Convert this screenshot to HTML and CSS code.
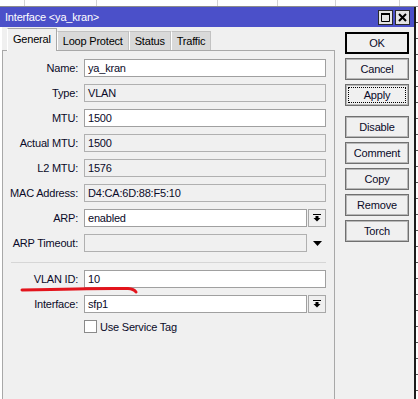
FILE: index.html
```html
<!DOCTYPE html>
<html lang="en">
<head>
  <meta charset="UTF-8" />
  <title>Interface &lt;ya_kran&gt;</title>
  <link rel="stylesheet" href="styles.css">
</head>
<body>

  <div class="desktop">
    <div class="strip-top">
      <span class="cell w25"></span>
      <span class="cell w72"></span>
      <span class="cell w121"></span>
      <span class="cell w60"></span>
      <span class="cell w58"></span>
      <span class="cell w64"></span>
    </div>

    <div class="desk-row">
      <div class="window">
        <div class="titlebar">
          <span class="title">Interface &lt;ya_kran&gt;</span>
          <div class="title-btns">
            <span class="tbtn">
              <svg width="9" height="9" viewBox="0 0 9 9"><path d="M0.5 0.5h8v8h-8z" fill="none" stroke="#000"/><rect x="0" y="0" width="9" height="2" fill="#000"/></svg>
            </span>
            <span class="tbtn">
              <svg width="9" height="9" viewBox="0 0 9 9"><path d="M1 1L8 8M8 1L1 8" stroke="#000" stroke-width="2"/></svg>
            </span>
          </div>
        </div>

        <div class="window-body">
          <div class="left">
            <div class="tabs">
              <span class="tab active">General</span>
              <span class="tab">Loop Protect</span>
              <span class="tab">Status</span>
              <span class="tab">Traffic</span>
            </div>

            <div class="panel">
              <div class="form">
                <span class="label">Name:</span>
                <div class="field">ya_kran</div>

                <span class="label">Type:</span>
                <div class="field ro">VLAN</div>

                <span class="label">MTU:</span>
                <div class="field">1500</div>

                <span class="label">Actual MTU:</span>
                <div class="field ro">1500</div>

                <span class="label">L2 MTU:</span>
                <div class="field ro">1576</div>

                <span class="label">MAC Address:</span>
                <div class="field ro">D4:CA:6D:88:F5:10</div>

                <span class="label">ARP:</span>
                <div class="combo">
                  <div class="field grow">enabled</div>
                  <span class="drop">
                    <svg width="8" height="8" viewBox="0 0 8 8"><rect x="0" y="0" width="8" height="1"/><rect x="2.5" y="2" width="3" height="2"/><path d="M0.5 4h7L4 7.5z"/></svg>
                  </span>
                </div>

                <span class="label">ARP Timeout:</span>
                <div class="combo">
                  <div class="field ro grow"></div>
                  <span class="drop plain">
                    <svg width="9" height="5" viewBox="0 0 9 5"><path d="M0 0h9L4.5 5z"/></svg>
                  </span>
                </div>

                <div class="sep"></div>

                <span class="label">VLAN ID:</span>
                <div class="field">10</div>

                <span class="label">Interface:</span>
                <div class="combo">
                  <div class="field grow">sfp1</div>
                  <span class="drop">
                    <svg width="8" height="8" viewBox="0 0 8 8"><rect x="0" y="0" width="8" height="1"/><rect x="2.5" y="2" width="3" height="2"/><path d="M0.5 4h7L4 7.5z"/></svg>
                  </span>
                </div>

                <span class="label"></span>
                <label class="check"><span class="box"></span>Use Service Tag</label>
              </div>
            </div>
          </div>

          <div class="actions">
            <button class="btn default">OK</button>
            <button class="btn">Cancel</button>
            <button class="btn focus">Apply</button>
            <button class="btn spaced">Disable</button>
            <button class="btn">Comment</button>
            <button class="btn">Copy</button>
            <button class="btn">Remove</button>
            <button class="btn">Torch</button>
          </div>
        </div>
      </div>
      <div class="strip-side"></div>
    </div>

    <svg class="mark" width="418" height="399" viewBox="0 0 418 399">
      <path d="M22 290C60 289 100 288 128 288.5Q134 289 136 292" fill="none" stroke="#e3141c" stroke-width="3" stroke-linecap="round"/>
    </svg>
  </div>

</body>
</html>
```

FILE: styles.css
```css
* {
  box-sizing: border-box;
  margin: 0;
  padding: 0;
}

body {
  font-family: "Liberation Sans", Arial, sans-serif;
  font-size: 11px;
  letter-spacing: -0.2px;
  color: #000;
  background: #fff;
  overflow: hidden;
}

.desktop {
  position: relative;
  height: 399px;
  display: flex;
  flex-direction: column;
}

.strip-top {
  height: 7px;
  display: flex;
  border-bottom: 1px solid #8c8c8c;
}

.cell { border-right: 1px solid #d4d4d4; }
.w25 { width: 25px; }
.w72 { width: 72px; }
.w121 { width: 121px; }
.w60 { width: 60px; }
.w58 { width: 58px; }
.w64 { width: 64px; }

.desk-row {
  flex: 1;
  display: flex;
  min-height: 0;
}

.window {
  width: 416px;
  border-right: 2px solid #1c1c1c;
  display: flex;
  flex-direction: column;
  background: #f0f0f0;
}

.strip-side {
  width: 2px;
  background: repeating-linear-gradient(to bottom, #fff 0 15px, #555 15px 16px);
}

.titlebar {
  height: 20px;
  background: #4b50c9;
  color: #fff;
  display: flex;
  align-items: center;
  justify-content: space-between;
  padding: 0 4px 0 5px;
  font-size: 11px;
}

.title-btns {
  display: flex;
  gap: 2px;
}

.tbtn {
  width: 15px;
  height: 15px;
  background: #e4e4e4;
  border: 1px solid #2a2a2a;
  display: flex;
  align-items: center;
  justify-content: center;
}

.window-body {
  flex: 1;
  display: flex;
  border-left: 2px solid #fff;
  padding-top: 1px;
}

.left {
  width: 333px;
  display: flex;
  flex-direction: column;
}

.tabs {
  position: relative;
  z-index: 1;
  height: 22px;
  display: flex;
  align-items: flex-start;
  padding-left: 5px;
}

.tab {
  margin-top: 3px;
  height: 19px;
  padding: 0 5px;
  line-height: 18px;
  font-size: 11px;
  background: #d9d9d9;
  border: 1px solid #c2c2c2;
  border-bottom: none;
  border-left-color: #fff;
}

.tab.active {
  margin-top: 0;
  height: 23px;
  line-height: 20px;
  padding: 0 5px;
  background: #f0f0f0;
  border-color: #a8a8a8;
  border-left-color: #fff;
}

.panel {
  flex: 1;
  border: 1px solid #a8a8a8;
  border-bottom: none;
  padding: 8px 8px 0 0;
}

.form {
  display: grid;
  grid-template-columns: 75px 242px;
  column-gap: 6px;
  row-gap: 7px;
  align-items: center;
}

.label {
  text-align: right;
  white-space: nowrap;
  color: #0a0a28;
}

.field {
  height: 18px;
  border: 1px solid #a0a0a0;
  background: #fff;
  padding-left: 3px;
  line-height: 16px;
  white-space: nowrap;
  color: #0a0a28;
}

.field.ro {
  background: #f0f0f0;
  border-color: #b0b0b0;
}

.combo {
  display: flex;
  gap: 1px;
}

.grow { flex: 1; }

.drop {
  width: 18px;
  height: 18px;
  border: 1px solid #a8a8a8;
  display: flex;
  align-items: center;
  justify-content: center;
}

.drop.plain {
  border: none;
}

.sep {
  grid-column: 1 / -1;
  height: 1px;
  margin: 3px 0 0 8px;
  background: #d6d6d6;
}

.check {
  display: flex;
  align-items: center;
  gap: 3px;
  height: 13px;
  color: #0a0a28;
}

.box {
  width: 13px;
  height: 13px;
  border: 1px solid #8a8a8a;
  background: #fff;
}

.actions {
  margin: 4px 0 0 10px;
  width: 64px;
  display: flex;
  flex-direction: column;
  gap: 4px;
}

.btn {
  height: 22px;
  font-family: inherit;
  font-size: 11px;
  letter-spacing: -0.2px;
  color: #0a0a28;
  background: #f0f0f0;
  border: 1px solid #707070;
  box-shadow: inset 0 0 0 1px #b8b8b8;
}

.btn.default {
  border: 2px solid #000;
  box-shadow: none;
}

.btn.focus {
  outline: 1px dotted #000;
  outline-offset: -4px;
}

.btn.spaced { margin-top: 6px; }

.mark {
  position: absolute;
  top: 0;
  left: 0;
  pointer-events: none;
}
```
